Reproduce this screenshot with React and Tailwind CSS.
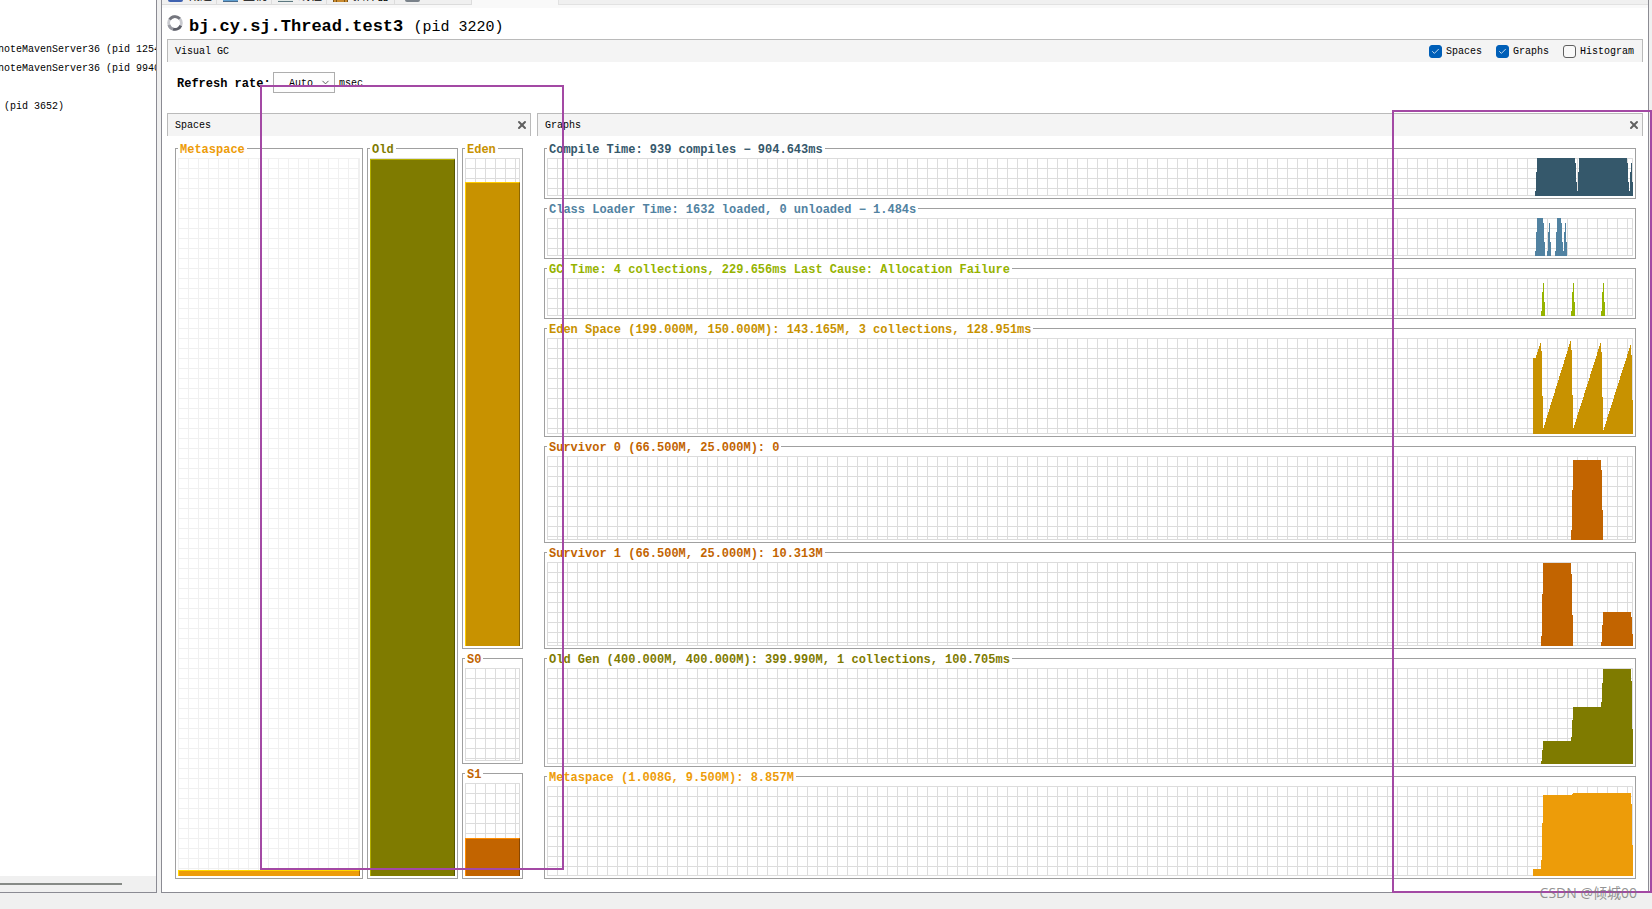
import { useState } from 'react';
import { Check, ChevronDown, X } from 'lucide-react';

const TABS = [
  { label: '概述', width: 'w-[55px]', icon: 'bg-[#3f62b0] rounded-b-sm' },
  { label: '监视', width: 'w-[55px]', icon: 'bg-[#5f9fd0] border-b border-[#4a6a8a]' },
  { label: '线程', width: 'w-[55px]', icon: 'bg-[#dfe8e6] border-b border-[#5d7880]' },
  { label: '抽样器', width: 'w-[68px]', icon: 'bg-[#c98a2e] border-x-4 border-double border-[#7d5518]' },
  { label: '', width: 'w-[77px]', icon: 'bg-[#7a828a] rounded-b-full mx-1' },
];

const PROCESSES = ['noteMavenServer36 (pid 1254', 'noteMavenServer36 (pid 9940', '', ' (pid 3652)'];

// straight climb from one sample to another, one step per pixel
function ramp(x0, y0, x1, y1) {
  const out = [];
  for (let x = x0; x <= x1; x++) {
    out.push([x, Math.round(y0 + ((y1 - y0) * (x - x0)) / (x1 - x0))]);
  }
  return out;
}

// each step is [x, top]; it holds until the next step
const GRAPHS = [
  {
    title: 'Compile Time: 939 compiles − 904.643ms',
    text: 'text-[#35586b]',
    fill: 'fill-[#35586b]',
    height: 38,
    size: 'h-[38px]',
    steps: [[2, 33], [3, 14], [4, 0], [42, 5], [43, 24], [44, 33], [45, 14], [46, 0], [94, 5], [95, 24], [96, 33], [97, 14], [98, 5], [99, 24]],
  },
  {
    title: 'Class Loader Time: 1632 loaded, 0 unloaded − 1.484s',
    text: 'text-[#5182a1]',
    fill: 'fill-[#5182a1]',
    height: 38,
    size: 'h-[38px]',
    steps: [
      [2, 33], [3, 14], [4, 0], [10, 5], [11, 24], [12, 38], [14, 33], [15, 14], [16, 5], [17, 24], [18, 38],
      [22, 33], [23, 14], [24, 0], [28, 5], [29, 24], [30, 33], [31, 14], [32, 5], [33, 24], [34, 38],
    ],
  },
  {
    title: 'GC Time: 4 collections, 229.656ms Last Cause: Allocation Failure',
    text: 'text-[#96b300]',
    fill: 'fill-[#96b300]',
    height: 38,
    size: 'h-[38px]',
    steps: [
      [8, 33], [9, 14], [10, 5], [11, 24], [12, 38],
      [38, 33], [39, 14], [40, 5], [41, 24], [42, 38],
      [68, 33], [69, 14], [70, 5], [71, 24], [72, 38],
    ],
  },
  {
    title: 'Eden Space (199.000M, 150.000M): 143.165M, 3 collections, 128.951ms',
    text: 'text-[#c89200]',
    fill: 'fill-[#c89200]',
    height: 96,
    size: 'h-[96px]',
    steps: [
      [0, 20], ...ramp(3, 17, 7, 5), [8, 13], [9, 58],
      ...ramp(10, 90, 37, 3), [38, 12], [39, 57],
      ...ramp(40, 90, 67, 5), [68, 14], [69, 59],
      ...ramp(70, 92, 97, 7), [98, 17], [99, 62],
    ],
  },
  {
    title: 'Survivor 0 (66.500M, 25.000M): 0',
    text: 'text-[#c26400]',
    fill: 'fill-[#c26400]',
    height: 84,
    size: 'h-[84px]',
    steps: [[38, 74], [39, 34], [40, 4], [68, 14], [69, 54], [70, 84]],
  },
  {
    title: 'Survivor 1 (66.500M, 25.000M): 10.313M',
    text: 'text-[#c26400]',
    fill: 'fill-[#c26400]',
    height: 84,
    size: 'h-[84px]',
    steps: [[8, 74], [9, 32], [10, 1], [38, 12], [39, 53], [40, 84], [68, 80], [69, 63], [70, 50], [98, 55], [99, 72]],
  },
  {
    title: 'Old Gen (400.000M, 400.000M): 399.990M, 1 collections, 100.705ms',
    text: 'text-[#7f7b00]',
    fill: 'fill-[#7f7b00]',
    height: 96,
    size: 'h-[96px]',
    steps: [[8, 93], [9, 82], [10, 73], [38, 69], [39, 52], [40, 39], [68, 34], [69, 15], [70, 1], [98, 13], [99, 61]],
  },
  {
    title: 'Metaspace (1.008G, 9.500M): 8.857M',
    text: 'text-[#ed9c09]',
    fill: 'fill-[#ed9c09]',
    height: 90,
    size: 'h-[90px]',
    steps: [[0, 83], [8, 74], [9, 37], [10, 9], [39, 8], [40, 7], [98, 18], [99, 59]],
  },
];

const GRID =
  'bg-[linear-gradient(to_right,#dcdcdc_1px,transparent_1px),linear-gradient(to_bottom,#dcdcdc_1px,transparent_1px)] bg-[size:10px_10px] shadow-[inset_-1px_-1px_#dcdcdc]';
const GRID_LIGHT =
  'bg-[linear-gradient(to_right,#f0f0f0_1px,transparent_1px),linear-gradient(to_bottom,#f0f0f0_1px,transparent_1px)] bg-[size:10px_10px] shadow-[inset_-1px_-1px_#f0f0f0]';

function stepPath(steps, height) {
  let d = `M${steps[0][0]} ${height}`;
  steps.forEach(([x, y]) => {
    d += `H${x}V${y}`;
  });
  return `${d}H100V${height}Z`;
}

function Graph({ title, text, fill, height, size, steps }) {
  return (
    <fieldset className="min-w-0 border border-[#a0a0a0] px-0.5 pb-0.5">
      <legend className={`h-[19px] px-0.5 text-xs leading-[22px] font-bold whitespace-pre ${text}`}>{title}</legend>
      <div className={`flex justify-end ${GRID} ${size}`}>
        <svg width="100" height={height} viewBox={`0 0 100 ${height}`} shapeRendering="crispEdges" className={fill}>
          <path d={stepPath(steps, height)} />
        </svg>
      </div>
    </fieldset>
  );
}

function Space({ title, text, grid = GRID, bar, level, className, size = 'h-full' }) {
  return (
    <fieldset className={`min-w-0 border border-[#a0a0a0] px-0.5 pb-0.5 ${className}`}>
      <legend className={`h-[19px] px-0.5 text-xs leading-[22px] font-bold ${text}`}>{title}</legend>
      <div className={`flex flex-col justify-end ${size} ${grid}`}>
        {level > 0 && <div className={`border-t border-x ${bar}`} style={{ height: `${level}%` }} />}
      </div>
    </fieldset>
  );
}

function PanelHeader({ title }) {
  return (
    <div className="h-[23px] flex items-center justify-between border-t border-x border-[#bababa] bg-[#f4f4f4] pl-[7px] pr-0.5">
      <h2 className="pt-0.5">{title}</h2>
      <button type="button" aria-label={`Close ${title}`} className="text-[#606060]">
        <X className="size-3" strokeWidth={4} />
      </button>
    </div>
  );
}

function Toggle({ label, checked, onChange }) {
  return (
    <label className="flex items-center gap-1">
      <span className="relative flex">
        <input
          type="checkbox"
          checked={checked}
          onChange={(e) => onChange(e.target.checked)}
          className="size-[13px] appearance-none rounded-[3px] border border-[#606060] bg-[#f9f9f9] checked:border-[#005fb8] checked:bg-[#005fb8]"
        />
        {checked && <Check className="absolute inset-0 m-auto size-[9px] text-white pointer-events-none" strokeWidth={2} />}
      </span>
      <span className="pt-0.5">{label}</span>
    </label>
  );
}

export default function App() {
  const [spaces, setSpaces] = useState(true);
  const [graphs, setGraphs] = useState(true);
  const [histogram, setHistogram] = useState(false);

  return (
    <div className="relative min-h-screen flex items-stretch overflow-hidden bg-[#f0f0f0] pb-4 font-['Liberation_Mono','Noto_Sans_CJK_SC',monospace] text-[10px] leading-[14px] text-black">
      <aside className="w-[157px] shrink-0 flex flex-col border-r border-b border-[#8b8b93] bg-white">
        <div className="flex-1 pt-10 overflow-hidden">
          <ul className="-ml-0.5">
            {PROCESSES.map((name, i) => (
              <li key={i} className="h-[19px] leading-[19px] whitespace-pre">{name}</li>
            ))}
          </ul>
        </div>
        <div className="h-4 flex items-center bg-[#f0f0f0]">
          <div className="w-[122px] h-0.5 bg-[#868a86]" />
        </div>
      </aside>

      <main className="min-w-0 flex-1 ml-1 mr-[3px] border-x border-b border-[#8b8b93] bg-white">
        <nav className="h-2 flex items-start bg-[#f9f9f9]">
          {TABS.map((tab, i) => (
            <button
              key={i}
              type="button"
              aria-label={tab.label || 'Profiler'}
              className={`h-[5px] shrink-0 flex items-end gap-[5px] overflow-hidden border-r border-b border-[#dcdcdc] bg-[#f0f0f0] pl-1.5 text-xs leading-[14px] ${tab.width}`}
            >
              <span className={`w-[15px] h-0.5 mb-0.5 shrink-0 ${tab.icon}`} />
              <span className="whitespace-nowrap">{tab.label}</span>
            </button>
          ))}
          <div className="flex-1 h-[5px] ml-[86px] border-l border-b border-[#e2e2e2] bg-[#f0f0f0]" />
        </nav>

        <div className="px-[5px]">
          <div className="h-[31px] flex items-center gap-1.5">
            <svg width="16" height="18" viewBox="0 0 16 18" fill="none" strokeWidth="2.8" className="mb-0.5">
              <circle cx="8" cy="9" r="6.4" stroke="#c9cacf" />
              <path d="M2.6 5.5A6.4 6.4 0 0 1 12.8 4.7" stroke="#74757d" />
              <path d="M13.8 11.6A6.4 6.4 0 0 1 6 15.1" stroke="#5d5f68" />
              <path d="M6 15.1A6.4 6.4 0 0 1 1.9 11" stroke="#9a9ba3" />
            </svg>
            <h1 className="pt-2 text-[17px] leading-5 font-bold whitespace-pre">
              bj.cy.sj.Thread.test3 <span className="text-[15px] font-normal">(pid 3220)</span>
            </h1>
          </div>

          <div className="h-[23px] flex items-center justify-between border-t border-x border-[#bababa] bg-[#f4f4f4] pl-[7px] pr-2">
            <h2 className="pt-0.5">Visual GC</h2>
            <div className="flex gap-3.5">
              <Toggle label="Spaces" checked={spaces} onChange={setSpaces} />
              <Toggle label="Graphs" checked={graphs} onChange={setGraphs} />
              <Toggle label="Histogram" checked={histogram} onChange={setHistogram} />
            </div>
          </div>

          <div className="flex items-center pl-2.5 pt-2.5 pb-5">
            <label htmlFor="rate" className="w-24 h-[21px] text-xs leading-6 font-bold whitespace-nowrap">Refresh rate:</label>
            <div className="relative h-[21px]">
              <select id="rate" defaultValue="Auto" className="w-[62px] h-[21px] appearance-none border border-[#adadad] bg-[#fdfdfd] pt-0.5 pl-[15px]">
                <option>Auto</option>
                <option>100</option>
                <option>500</option>
                <option>1000</option>
              </select>
              <ChevronDown className="absolute right-1 top-[5px] size-[11px] text-[#505050] pointer-events-none" strokeWidth={2} />
            </div>
            <span className="pt-0.5 pl-1">msec</span>
          </div>

          <div className="flex gap-1.5 pb-[13px]">
            {spaces && (
              <section className="w-[364px] shrink-0 flex flex-col">
                <PanelHeader title="Spaces" />
                <div className="flex-1 flex gap-1 px-2 pt-[3px]">
                  <Space
                    title="Metaspace"
                    text="text-[#ed9c09]"
                    grid={GRID_LIGHT}
                    bar="bg-[#ed9c09] border-t-[#ffd800] border-l-[#ffd800] border-r-[#a66d06]"
                    level={0.8}
                    className="flex-1"
                  />
                  <Space
                    title="Old"
                    text="text-[#7f7b00]"
                    bar="bg-[#7f7b00] border-t-[#b3ae00] border-l-[#b3ae00] border-r-[#595600]"
                    level={99.9}
                    className="w-[91px]"
                  />
                  <div className="w-[61px] flex flex-col">
                    <Space
                      title="Eden"
                      text="text-[#c89200]"
                      bar="bg-[#c89200] border-t-[#ffcc00] border-l-[#ffcc00] border-r-[#8c6600]"
                      level={95.1}
                      className="flex-1"
                    />
                    <Space title="S0" text="text-[#c26400]" level={0} size="h-[93px]" />
                    <Space
                      title="S1"
                      text="text-[#c26400]"
                      bar="bg-[#c26400] border-t-[#ff8c00] border-l-[#ff8c00] border-r-[#884600]"
                      level={41}
                      size="h-[93px]"
                    />
                  </div>
                </div>
              </section>
            )}

            {graphs && (
              <section className="min-w-0 flex-1 flex flex-col">
                <PanelHeader title="Graphs" />
                <div className="flex flex-col px-[7px] pt-[3px]">
                  {GRAPHS.map((graph) => (
                    <Graph key={graph.title} {...graph} />
                  ))}
                </div>
              </section>
            )}
          </div>
        </div>
      </main>

      {/* highlight marks drawn over the window */}
      <div className="absolute left-[260px] top-[85px] w-[304px] h-[785px] border-2 border-[#a349a4] pointer-events-none" />
      <div className="absolute right-0 top-[110px] w-[260px] h-[783px] border-2 border-[#a349a4] pointer-events-none" />
      <div className="absolute right-[15px] bottom-1 font-['Open_Sans','Noto_Sans_CJK_SC',sans-serif] text-sm leading-6 text-[#777777]/80 pointer-events-none">
        CSDN @倾城00
      </div>
    </div>
  );
}
